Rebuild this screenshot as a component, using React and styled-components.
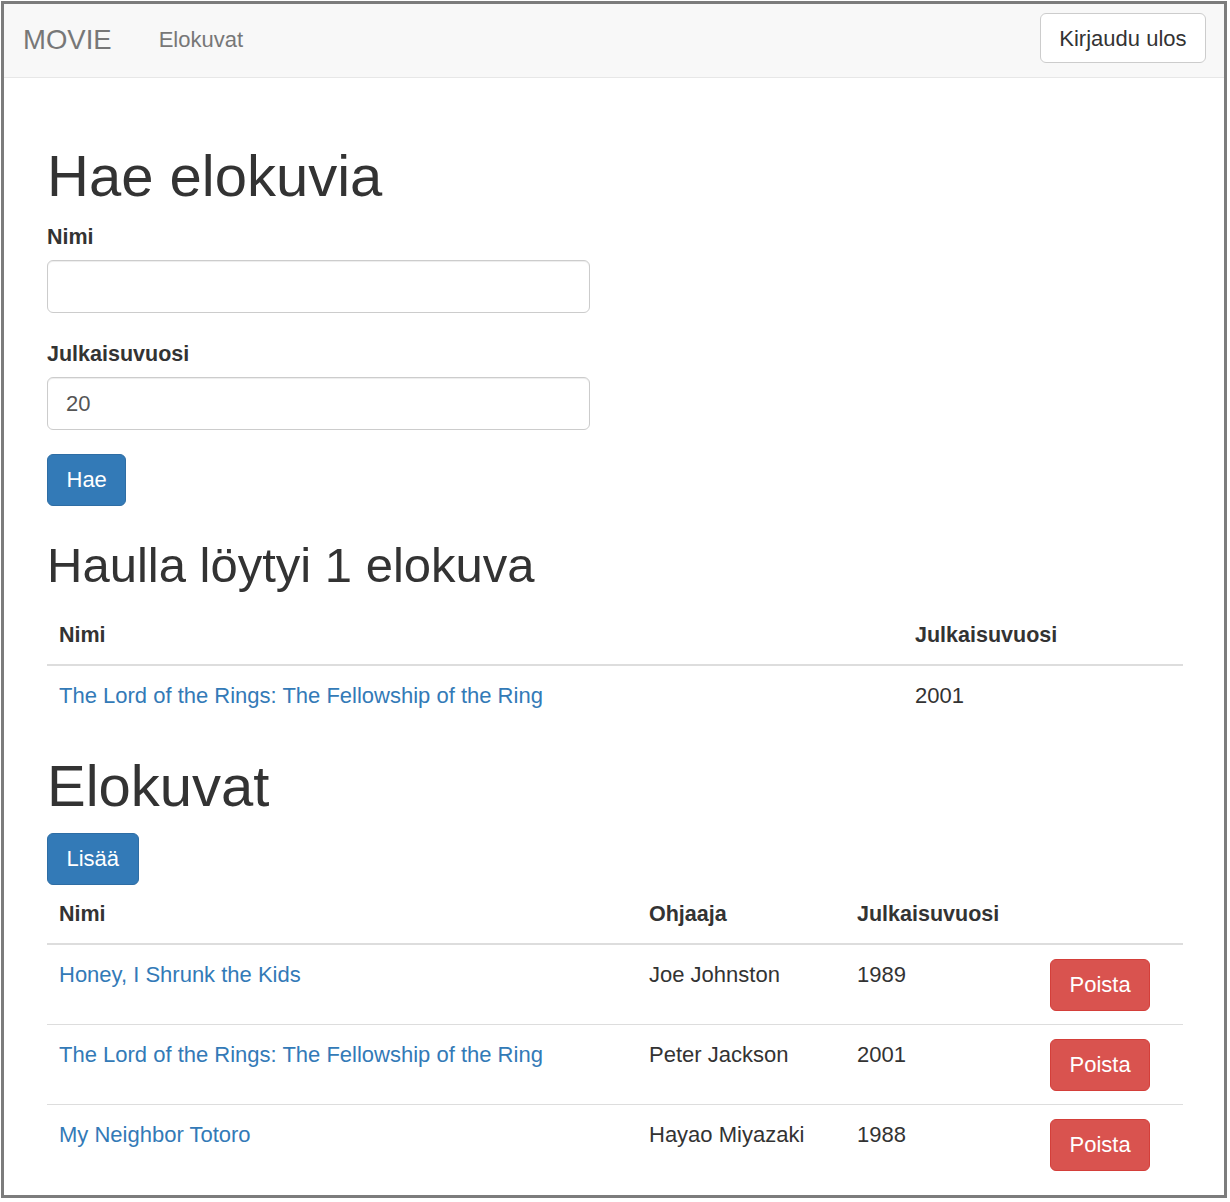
import React from 'react';
import styled, { createGlobalStyle, css } from 'styled-components';

const Global = createGlobalStyle`
  html, body { margin: 0; padding: 0; background: #fff; }
  body {
    font-family: "Liberation Sans", Arial, Helvetica, sans-serif;
    font-size: 22px;
    line-height: 31px;
    color: #333;
  }
  *, *::before, *::after { box-sizing: border-box; }
`;

const Frame = styled.div`
  margin: 1px;
  width: 1226px;
  height: 1197px;
  border: 3px solid #7c7c7c;
  overflow: hidden;
  background: #fff;
`;

const Navbar = styled.nav`
  height: 74px;
  background: #f8f8f8;
  border-bottom: 1px solid #e7e7e7;
  display: flex;
  align-items: center;
  padding: 0 18px 2px 19px;
`;

const Brand = styled.a`
  font-size: 27.5px;
  line-height: 31px;
  color: #777;
  text-decoration: none;
`;

const NavLink = styled.a`
  margin-left: 47px;
  font-size: 22px;
  color: #777;
  text-decoration: none;
`;

const Button = styled.button`
  height: 52px;
  padding: 0 18.5px;
  border-radius: 6px;
  font-family: inherit;
  font-size: 22px;
  line-height: 50px;
  cursor: pointer;
  ${({ $variant }) =>
    $variant === 'primary'
      ? css`
          background: #337ab7;
          border: 1px solid #2e6da4;
          color: #fff;
        `
      : $variant === 'danger'
      ? css`
          background: #d9534f;
          border: 1px solid #d43f3a;
          color: #fff;
        `
      : css`
          background: #fff;
          border: 1px solid #ccc;
          color: #333;
        `}
`;

const LogoutButton = styled(Button)`
  margin-left: auto;
  align-self: flex-start;
  margin-top: 9px;
  height: 50px;
  line-height: 50px;
`;

const Main = styled.main`
  padding: 66px 0 0 43px;
  width: 1179px;
`;

const H1 = styled.h1`
  font-size: 58px;
  line-height: 64px;
  font-weight: 400;
  margin: 0 0 ${({ $mb }) => $mb ?? 14}px;
  color: #333;
`;

const H2 = styled.h2`
  font-size: 49px;
  line-height: 54px;
  font-weight: 400;
  margin: 32px 0 15px;
  color: #333;
`;

const FormGroup = styled.div`
  margin-bottom: ${({ $mb }) => $mb ?? 24}px;
`;

const Label = styled.label`
  display: block;
  font-weight: 700;
  font-size: 21.5px;
  line-height: 31px;
  margin-bottom: 7px;
`;

const Input = styled.input`
  display: block;
  width: 543px;
  height: 53px;
  padding: 0 18px;
  border: 1px solid #ccc;
  border-radius: 6px;
  font-family: inherit;
  font-size: 22px;
  color: #555;
  box-shadow: inset 0 1px 1px rgba(0, 0, 0, 0.075);
  outline: none;
`;

const ButtonRow = styled.div`
  display: flex;
  margin-bottom: ${({ $mb }) => $mb || 0}px;
`;

const Table = styled.table`
  width: 1136px;
  border-collapse: collapse;
  table-layout: fixed;
  margin-bottom: ${({ $mb }) => $mb || 0}px;
`;

const Th = styled.th`
  text-align: left;
  font-weight: 700;
  font-size: 21.5px;
  padding: 13px 12px;
  line-height: 31px;
  border-bottom: 2px solid #ddd;
  vertical-align: bottom;
`;

const Td = styled.td`
  padding: 14px 12px 13px;
  line-height: 31px;
  vertical-align: top;
  border-top: 1px solid #ddd;
  tbody tr:first-child & {
    border-top: 0;
  }
`;

const Link = styled.a`
  color: #337ab7;
  text-decoration: none;
`;

const movies = [
  { name: 'Honey, I Shrunk the Kids', director: 'Joe Johnston', year: 1989 },
  { name: 'The Lord of the Rings: The Fellowship of the Ring', director: 'Peter Jackson', year: 2001 },
  { name: 'My Neighbor Totoro', director: 'Hayao Miyazaki', year: 1988 },
];

export default function App() {
  return (
    <>
      <Global />
      <Frame>
        <Navbar>
          <Brand href="#">MOVIE</Brand>
          <NavLink href="#">Elokuvat</NavLink>
          <LogoutButton>Kirjaudu ulos</LogoutButton>
        </Navbar>
        <Main>
          <H1>Hae elokuvia</H1>
          <FormGroup $mb={26}>
            <Label>Nimi</Label>
            <Input type="text" defaultValue="" />
          </FormGroup>
          <FormGroup $mb={24}>
            <Label>Julkaisuvuosi</Label>
            <Input type="text" defaultValue="20" />
          </FormGroup>
          <ButtonRow>
            <Button $variant="primary">Hae</Button>
          </ButtonRow>
          <H2>Haulla löytyi 1 elokuva</H2>
          <Table $mb={30}>
            <colgroup>
              <col style={{ width: 856 }} />
              <col style={{ width: 280 }} />
            </colgroup>
            <thead>
              <tr>
                <Th>Nimi</Th>
                <Th>Julkaisuvuosi</Th>
              </tr>
            </thead>
            <tbody>
              <tr>
                <Td><Link href="#">The Lord of the Rings: The Fellowship of the Ring</Link></Td>
                <Td>2001</Td>
              </tr>
            </tbody>
          </Table>
          <H1 $mb={15}>Elokuvat</H1>
          <ButtonRow $mb={1}>
            <Button $variant="primary">Lisää</Button>
          </ButtonRow>
          <Table>
            <colgroup>
              <col style={{ width: 590 }} />
              <col style={{ width: 208 }} />
              <col style={{ width: 193 }} />
              <col style={{ width: 145 }} />
            </colgroup>
            <thead>
              <tr>
                <Th>Nimi</Th>
                <Th>Ohjaaja</Th>
                <Th>Julkaisuvuosi</Th>
                <Th></Th>
              </tr>
            </thead>
            <tbody>
              {movies.map((m) => (
                <tr key={m.name}>
                  <Td><Link href="#">{m.name}</Link></Td>
                  <Td>{m.director}</Td>
                  <Td>{m.year}</Td>
                  <Td><Button $variant="danger">Poista</Button></Td>
                </tr>
              ))}
            </tbody>
          </Table>
        </Main>
      </Frame>
    </>
  );
}
